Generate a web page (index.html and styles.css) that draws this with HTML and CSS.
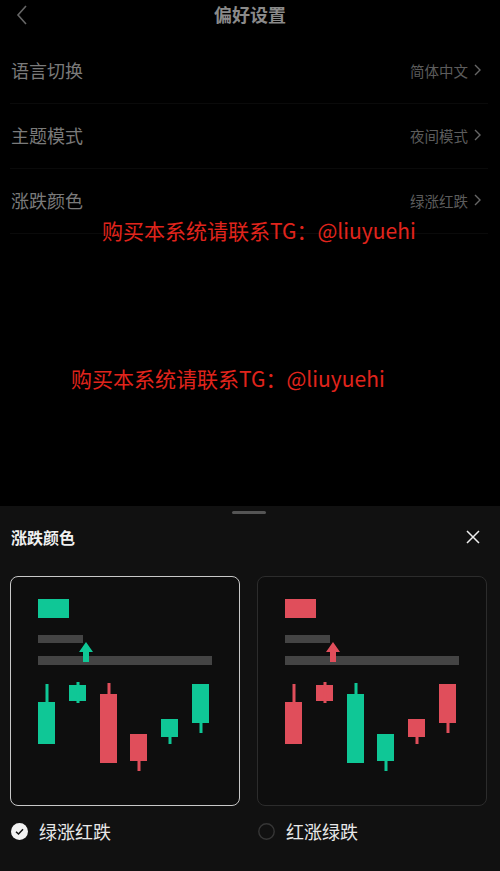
FILE: index.html
```html
<!DOCTYPE html>
<html lang="zh-CN">
<head>
  <meta charset="UTF-8" />
  <meta name="viewport" content="width=device-width, initial-scale=1.0"/>
  <title>偏好设置</title>
  <link rel="stylesheet" href="styles.css">
</head>
<body>

  <div class="page">
    <header class="topbar">
      <svg class="back" width="12" height="20" viewBox="0 0 12 20"><path d="M10 1 L2 10 L10 19" fill="none" stroke="#666" stroke-width="1.6"/></svg>
      <h1>偏好设置</h1>
    </header>

    <ul class="settings">
      <li class="row">
        <span class="label">语言切换</span>
        <span class="value">简体中文
          <svg width="7" height="12" viewBox="0 0 7 12"><path d="M1 1 L6 6 L1 11" fill="none" stroke="#666" stroke-width="1.4"/></svg>
        </span>
      </li>
      <li class="row">
        <span class="label">主题模式</span>
        <span class="value">夜间模式
          <svg width="7" height="12" viewBox="0 0 7 12"><path d="M1 1 L6 6 L1 11" fill="none" stroke="#666" stroke-width="1.4"/></svg>
        </span>
      </li>
      <li class="row">
        <span class="label">涨跌颜色</span>
        <span class="value">绿涨红跌
          <svg width="7" height="12" viewBox="0 0 7 12"><path d="M1 1 L6 6 L1 11" fill="none" stroke="#666" stroke-width="1.4"/></svg>
        </span>
      </li>
    </ul>

    <div class="watermark wm-1">购买本系统请联系TG：@liuyuehi</div>
    <div class="watermark wm-2">购买本系统请联系TG：@liuyuehi</div>
  </div>

  <div class="sheet">
    <div class="handle"></div>
    <div class="sheet-head">
      <h2>涨跌颜色</h2>
      <svg class="close" width="14" height="14" viewBox="0 0 14 14"><path d="M1 1 L13 13 M13 1 L1 13" stroke="#eee" stroke-width="1.5"/></svg>
    </div>

    <div class="options">
      <div class="option">
        <div class="card selected">
          <svg width="230" height="230" viewBox="0 0 230 230">
            <rect x="28" y="23" width="31" height="19" fill="#0fc796"/>
            <rect x="28" y="59" width="45" height="8" fill="#444"/>
            <rect x="28" y="80" width="174" height="9" fill="#444"/>
            <polygon points="76,66 83,76 79,76 79,86 73,86 73,76 69,76" fill="#0fc796"/>
            <g fill="#0fc796">
              <rect x="28" y="126" width="17" height="42"/><rect x="35.5" y="108" width="3" height="18"/>
              <rect x="59" y="109" width="17" height="16"/><rect x="66.5" y="106" width="3" height="21"/>
              <rect x="151" y="143" width="17" height="18"/><rect x="158.5" y="161" width="3" height="7"/>
              <rect x="182" y="108" width="17" height="39"/><rect x="189.5" y="147" width="3" height="10"/>
            </g>
            <g fill="#e04e5b">
              <rect x="90" y="118" width="17" height="69"/><rect x="97.5" y="107" width="3" height="11"/>
              <rect x="120" y="158" width="17" height="27"/><rect x="127.5" y="185" width="3" height="10"/>
            </g>
          </svg>
        </div>
        <div class="radio">
          <svg width="17" height="17" viewBox="0 0 17 17"><circle cx="8.5" cy="8.5" r="8.5" fill="#f2f2f2"/><path d="M5 8.7 L7.5 11 L12 6.3" fill="none" stroke="#111" stroke-width="1.5"/></svg>
          <span>绿涨红跌</span>
        </div>
      </div>

      <div class="option">
        <div class="card">
          <svg width="230" height="230" viewBox="0 0 230 230">
            <rect x="28" y="23" width="31" height="19" fill="#e04e5b"/>
            <rect x="28" y="59" width="45" height="8" fill="#444"/>
            <rect x="28" y="80" width="174" height="9" fill="#444"/>
            <polygon points="76,66 83,76 79,76 79,86 73,86 73,76 69,76" fill="#e04e5b"/>
            <g fill="#e04e5b">
              <rect x="28" y="126" width="17" height="42"/><rect x="35.5" y="108" width="3" height="18"/>
              <rect x="59" y="109" width="17" height="16"/><rect x="66.5" y="106" width="3" height="21"/>
              <rect x="151" y="143" width="17" height="18"/><rect x="158.5" y="161" width="3" height="7"/>
              <rect x="182" y="108" width="17" height="39"/><rect x="189.5" y="147" width="3" height="10"/>
            </g>
            <g fill="#0fc796">
              <rect x="90" y="118" width="17" height="69"/><rect x="97.5" y="107" width="3" height="11"/>
              <rect x="120" y="158" width="17" height="27"/><rect x="127.5" y="185" width="3" height="10"/>
            </g>
          </svg>
        </div>
        <div class="radio">
          <svg width="17" height="17" viewBox="0 0 17 17"><circle cx="8.5" cy="8.5" r="7.7" fill="none" stroke="#363636" stroke-width="1.4"/></svg>
          <span>红涨绿跌</span>
        </div>
      </div>
    </div>
  </div>

</body>
</html>
```

FILE: styles.css
```css
* {
  box-sizing: border-box;
}

body {
  margin: 0;
  width: 500px;
  height: 871px;
  overflow: hidden;
  background: #000;
  font-family: "Noto Sans CJK SC", "Noto Sans", sans-serif;
  display: flex;
  flex-direction: column;
}

.page {
  position: relative;
  height: 506px;
}

.topbar {
  position: relative;
  height: 29px;
  display: flex;
  align-items: center;
  justify-content: center;
}

.back {
  position: absolute;
  left: 16px;
  top: 5px;
}

.topbar h1 {
  margin: 0;
  font-size: 18px;
  font-weight: 600;
  color: #8a8a8a;
  line-height: 29px;
}

.settings {
  list-style: none;
  margin: 10px 0 0;
  padding: 0;
}

.row {
  height: 65px;
  margin: 0 12px 0 10px;
  display: flex;
  align-items: center;
  justify-content: space-between;
  border-bottom: 1px solid #0a0a0a;
  padding: 0 7px 2px 0;
}

.label {
  font-size: 18px;
  color: #7a7a7a;
  padding-left: 1px;
}

.value {
  font-size: 14.5px;
  color: #5c5c5c;
  display: flex;
  align-items: center;
  gap: 6px;
}

.watermark {
  position: absolute;
  font-size: 21px;
  color: #e0241c;
  white-space: nowrap;
  line-height: 28px;
}

.wm-1 {
  left: 102px;
  top: 216px;
}

.wm-2 {
  left: 71px;
  top: 364px;
}

.sheet {
  flex: 1;
  background: #111;
  padding-top: 5px;
}

.handle {
  width: 34px;
  height: 3px;
  border-radius: 2px;
  background: #555;
  margin: 0 auto 0 232px;
}

.sheet-head {
  height: 46px;
  display: flex;
  align-items: center;
  justify-content: space-between;
  padding: 0 20px 0 11px;
}

.sheet-head h2 {
  margin: 0;
  font-size: 16px;
  font-weight: 600;
  color: #f0f0f0;
}

.options {
  margin-top: 16px;
  display: grid;
  grid-template-columns: 230px 230px;
  gap: 17px;
  padding: 0 13px 0 10px;
}

.card {
  width: 230px;
  height: 230px;
  border: 1px solid #2c2c2c;
  border-radius: 8px;
  background: #0e0e0e;
  overflow: hidden;
}

.card svg {
  display: block;
  margin: -1px;
}

.card.selected {
  border-color: #c8c8c8;
}

.radio {
  margin-top: 12px;
  display: flex;
  align-items: center;
  gap: 11px;
  padding-left: 1px;
}

.radio span {
  font-size: 18px;
  color: #e8e8e8;
}
```
